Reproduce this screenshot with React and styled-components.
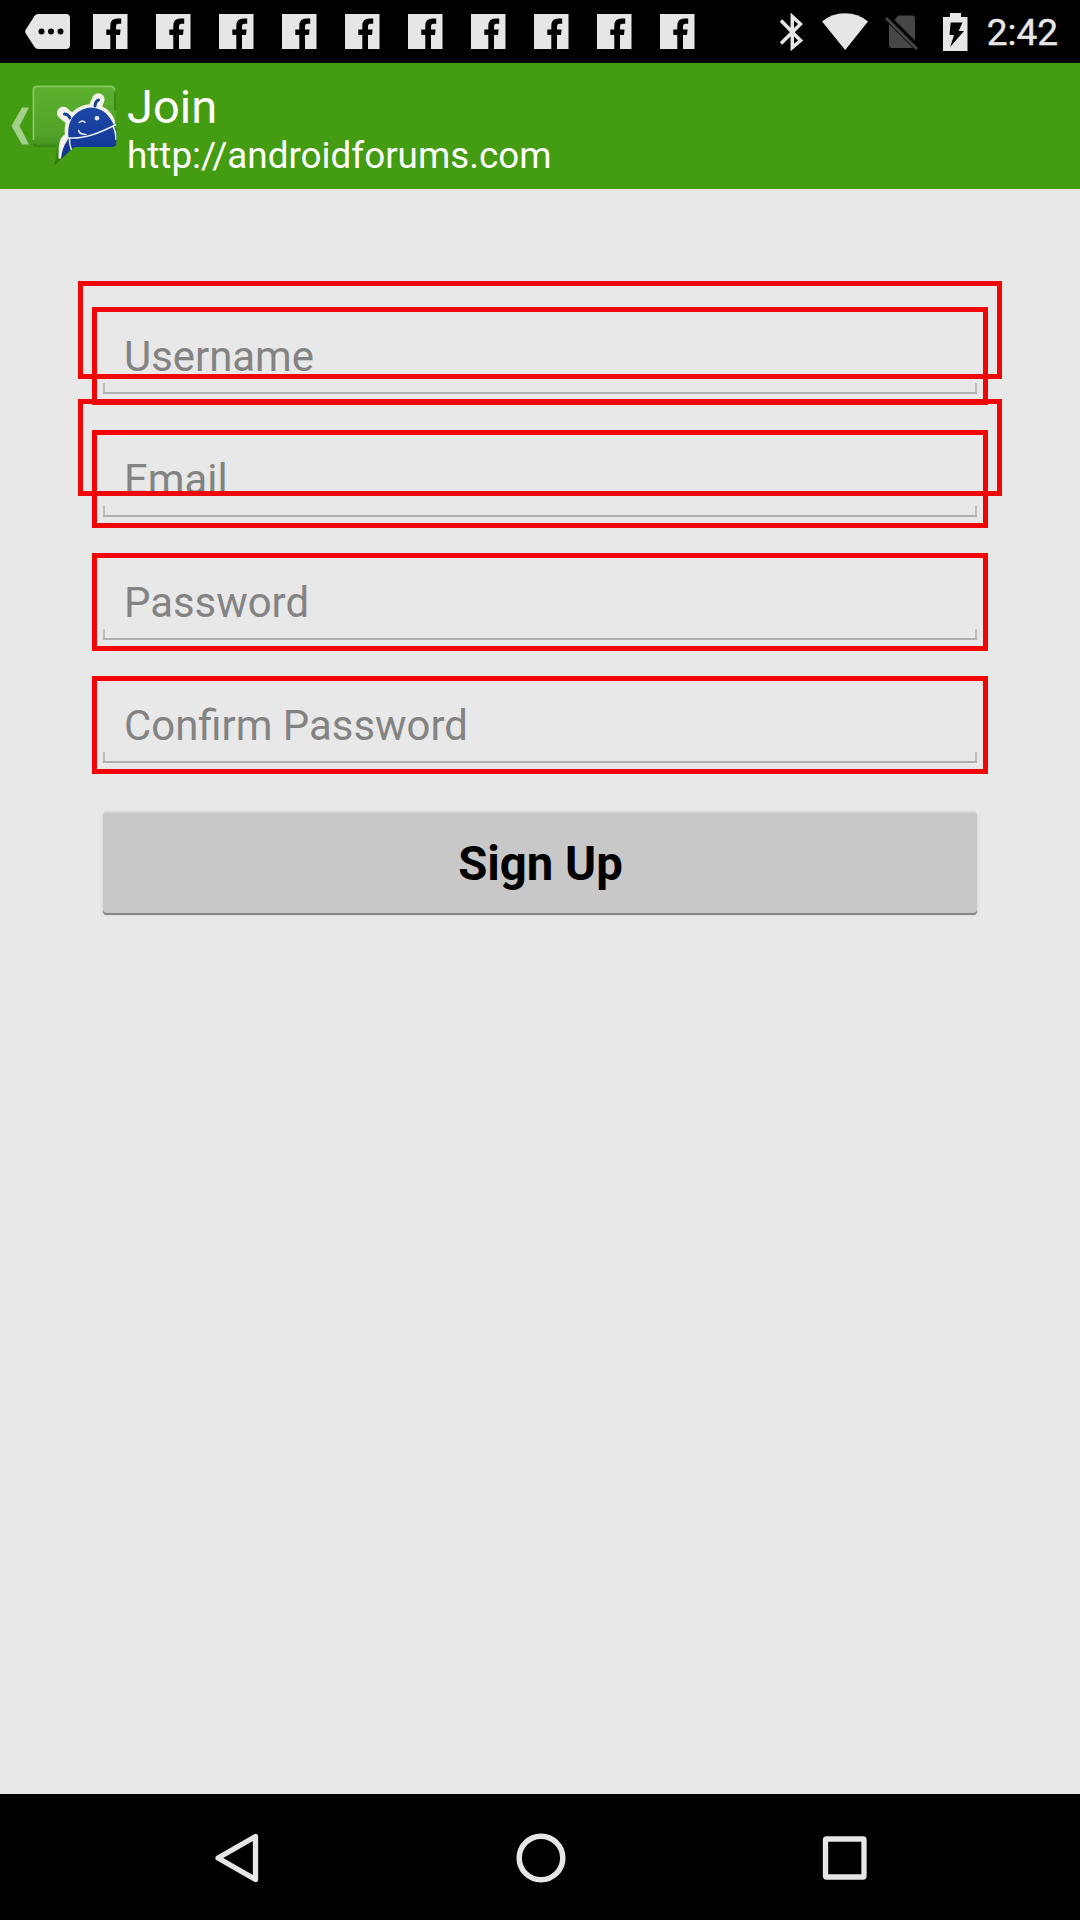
import React from "react";
import styled, { createGlobalStyle } from "styled-components";

const GlobalStyle = createGlobalStyle`
  * { box-sizing: border-box; }
  body { margin: 0; background: #e8e8e8; font-family: Roboto, sans-serif; }
`;

const Screen = styled.div`
  display: flex;
  flex-direction: column;
  width: 1080px;
  height: 1920px;
  overflow: hidden;
  background: #e8e8e8;
`;

const StatusBar = styled.header`
  display: flex;
  justify-content: space-between;
  align-items: center;
  height: 63px;
  padding: 0 22px 0 25px;
  background: #000;
`;

const Notifications = styled.div`
  display: flex;
  align-items: center;
  gap: 28px;
`;

const MoreIcon = styled.svg`
  margin-right: -5px;
`;

const SystemIcons = styled.div`
  display: flex;
  align-items: center;
`;

const StatusIcon = styled.svg`
  margin-right: ${(p) => p.$gap}px;
`;

const Clock = styled.time`
  color: #e6e6e6;
  font-size: 37px;
  line-height: 44px;
  padding-top: 3px;
  -webkit-text-stroke: 0.4px #e6e6e6;
`;

const AppBar = styled.div`
  display: flex;
  align-items: flex-start;
  height: 126px;
  padding: 20px 11px;
  background: #449c12;
`;

const UpButton = styled.button`
  display: flex;
  align-items: flex-start;
  padding: 1px 0 0;
  border: 0;
  background: none;
`;

const Titles = styled.div`
  display: flex;
  flex-direction: column;
  padding: 0 0 0 9px;
  color: #fff;
`;

const Title = styled.h1`
  margin: 0;
  font-size: 47px;
  line-height: 48px;
  font-weight: 400;
`;

const Subtitle = styled.span`
  padding-top: 3px;
  font-size: 36.85px;
  line-height: 44px;
`;

const Form = styled.form`
  flex: 1;
  display: flex;
  flex-direction: column;
  gap: 25px;
  padding: 118px 92px 0;
`;

const FieldFrame = styled.div`
  position: relative;
  display: flex;
  flex-direction: column;
  justify-content: flex-end;
  height: 98px;
  padding: 0 6px 6px;
  border: 5px solid #f20505;
`;

const Highlight = styled.span`
  position: absolute;
  z-index: 1;
  top: ${(p) => p.$top}px;
  left: -19px;
  right: -19px;
  height: ${(p) => p.$height}px;
  border: 5px solid #f00808;
  pointer-events: none;
`;

const Input = styled.input`
  width: 100%;
  height: 71px;
  padding: 0 20px 4px 21px;
  border: 0;
  outline: 0;
  background:
    linear-gradient(#b0b0b0, #b0b0b0) left bottom / 100% 2px no-repeat,
    linear-gradient(#bcbcbc, #bcbcbc) left bottom / 2px 11px no-repeat,
    linear-gradient(#bcbcbc, #bcbcbc) right bottom / 2px 11px no-repeat;
  font: 400 41.9px/50px Roboto, sans-serif;
  &::placeholder { color: #838383; opacity: 1; }
`;

const SignUp = styled.button`
  height: 103px;
  margin: 13px 11px 0;
  padding: 1px 0 0 1px;
  border: 0;
  border-radius: 4px;
  background: #c8c8c8;
  box-shadow: inset 0 -2px #858585, inset 0 1px #d2d2d2, 0 0 2px #bdbdbd;
  color: #000;
  font: 700 47.3px/56px Roboto, sans-serif;
`;

const NavBar = styled.nav`
  display: flex;
  justify-content: center;
  align-items: center;
  gap: 253px;
  height: 126px;
  padding: 1px 0 0 1px;
  background: #000;
`;

const NavButton = styled.button`
  display: flex;
  padding: 0;
  border: 0;
  background: none;
`;

const light = "#e6e6e6";

const SocialIcon = () => (
  <svg width="35" height="35" viewBox="0 0 35 35">
    <path fill={light} d="M0 0H34.500V35H0Z" />
    <path fill="#000" d="M17.300 35V12Q17.300 4.600 24.500 4.600H28.200V9.800H25.500Q23 9.800 23 12.500V15.500H27.600L27 20.900H23V35Z" />
    <path fill="#000" d="M13.300 15.500H20V20.900H13.300Z" />
  </svg>
);

const ForumLogo = () => (
  <svg width="86" height="84" viewBox="32 84 86 84">
    <defs>
      <linearGradient id="bubble" x1="0" y1="0" x2="0" y2="1">
        <stop offset="0" stopColor="#5cb02e" />
        <stop offset="0.6" stopColor="#52a428" />
        <stop offset="1" stopColor="#2f7410" />
      </linearGradient>
      <linearGradient id="robot" x1="0" y1="0" x2="0" y2="1">
        <stop offset="0" stopColor="#1c48a8" />
        <stop offset="1" stopColor="#123490" />
      </linearGradient>
      <clipPath id="shape">
        <path d="M36 85H112Q116.500 85 116.500 90V143Q116.500 147 112 147H75Q68 153 55 165Q58 157 56 147H36Q32.300 147 32.300 142V90Q32.300 85 36 85Z" />
      </clipPath>
    </defs>
    <path fill="url(#bubble)" d="M36 85.500H111Q115.500 85.500 115.500 90V142Q115.500 146.500 111 146.500H74Q66 156 54 165.500Q57 157 56 146.500H36Q32.500 146.500 32.500 142V90Q32.500 85.500 36 85.500Z" />
    <path fill="none" stroke="#8aca69" strokeWidth="1.600" d="M33.500 140V90Q33.500 86.500 37 86.500H111Q114 86.500 114.500 90" />
    <path fill="none" stroke="#387d16" strokeWidth="1.600" d="M34 144Q35 146 38 146H56M115 92V110" />
    <g fill="none" stroke="#f3f3ec" strokeLinecap="round" strokeLinejoin="round">
      <path strokeWidth="12.500" d="M63.200 113L68 117M98.300 99.500L95.500 106" />
      <path strokeWidth="10" d="M70 135Q68 122 77 114.500Q90 105 103 112.500Q108 116 110 122" />
    </g>
    <g clipPath="url(#shape)">
      <path fill="#f3f3ec" d="M58.500 158L58.800 147Q59.500 137 65.500 134L72 139L67 152L60 159Z" />
      <path fill="url(#robot)" d="M68.500 138Q66.500 120 78 112Q91 103.500 103 111Q110 115.500 116.500 130V148H73L61 159Q62 148 67 141Z" />
      <path fill="none" stroke="#e9eff8" strokeWidth="1.500" d="M66 137.500Q85 141 116 124.500M69.500 138.500Q69 144 71.500 150M112.500 125.500Q116 131 116 140" />
    </g>
    <g fill="none" strokeLinecap="round">
      <path stroke="#174194" strokeWidth="3" d="M64.500 114Q68 114 70 118M98.500 100Q95.500 101 95 106" />
      <path stroke="#e9eff8" strokeWidth="1.500" d="M79.300 122.500Q82.500 119.500 85 122.500M78.700 130.500Q79.500 134.500 86 134.500" />
    </g>
    <circle cx="97" cy="118.300" r="2.300" fill="#f1f5fa" />
  </svg>
);

const fields = [
  { label: "Username", type: "text", mark: { top: -31, height: 98 } },
  { label: "Email", type: "email", mark: { top: -36, height: 97 } },
  { label: "Password", type: "password" },
  { label: "Confirm Password", type: "password" },
];

export default function App() {
  return (
    <Screen>
      <GlobalStyle />
      <StatusBar>
        <Notifications>
          <MoreIcon width="45" height="35" viewBox="0 0 45 35">
            <path fill={light} d="M13 0H41Q45 0 45 4V31Q45 35 41 35H13Q11 35 9.500 33L.8 19.500Q-.3 17.500.8 15.500L9.500 2Q11 0 13 0Z" />
            <path fill="#000" d="M13.500 17.500a3 3 0 1 0 6 0a3 3 0 1 0-6 0M23 17.500a3 3 0 1 0 6 0a3 3 0 1 0-6 0M32.500 17.500a3 3 0 1 0 6 0a3 3 0 1 0-6 0" />
          </MoreIcon>
          {Array.from({ length: 10 }, (_, i) => <SocialIcon key={i} />)}
        </Notifications>
        <SystemIcons>
          <StatusIcon $gap={19} width="23" height="38" viewBox="0 0 23 38">
            <path fill="none" stroke={light} strokeWidth="3.500" d="M1 7.500L20.500 27.500L12.300 34.500V3.500L20.500 11L1 30.500" />
          </StatusIcon>
          <StatusIcon $gap={17} width="46" height="38" viewBox="0 0 46 38">
            <path fill={light} d="M0 8.500Q10 .3 23 .3T46 8.500L23.200 37Z" />
          </StatusIcon>
          <StatusIcon $gap={25} width="33" height="38" viewBox="0 0 33 38">
            <path fill="#464646" d="M13 2.500H27Q30 2.500 30 5.500V27.500L9.500 7ZM4 11L28 35H7Q4 35 4 32Z" />
            <path stroke="#464646" strokeWidth="3" d="M1 5L32 36" />
          </StatusIcon>
          <StatusIcon $gap={19} width="25" height="38" viewBox="0 0 25 38">
            <path fill={light} d="M7 0H18V4H24.500V38H0V4H7Z" />
            <path fill="#000" d="M7.700 9.500H19.500L15.700 18H21L7.200 34L11 22H6.500Z" />
          </StatusIcon>
          <Clock>2:42</Clock>
        </SystemIcons>
      </StatusBar>

      <AppBar>
        <UpButton type="button" aria-label="Navigate up">
          <svg width="21" height="84" viewBox="11 84 21 84">
            <path fill="#a3d08b" d="M22 107.500H29L19.500 126L29 144.500H22L11.500 126Z" />
          </svg>
          <ForumLogo />
        </UpButton>
        <Titles>
          <Title>Join</Title>
          <Subtitle>http://androidforums.com</Subtitle>
        </Titles>
      </AppBar>

      <Form>
        {fields.map(({ label, type, mark }) => (
          <FieldFrame key={label}>
            <Input type={type} placeholder={label} />
            {mark && <Highlight $top={mark.top} $height={mark.height} />}
          </FieldFrame>
        ))}
        <SignUp type="button">Sign Up</SignUp>
      </Form>

      <NavBar>
        <NavButton aria-label="Back">
          <svg width="50" height="50" viewBox="0 0 50 50">
            <path fill="none" stroke={light} strokeWidth="5.300" strokeLinejoin="round" d="M42.500 3.500V46.500L5 25Z" />
          </svg>
        </NavButton>
        <NavButton aria-label="Home">
          <svg width="50" height="50" viewBox="0 0 50 50">
            <circle cx="25" cy="25" r="21.800" fill="none" stroke={light} strokeWidth="5.500" />
          </svg>
        </NavButton>
        <NavButton aria-label="Recents">
          <svg width="50" height="50" viewBox="0 0 50 50">
            <rect x="6.500" y="6" width="38.500" height="38" rx="1" fill="none" stroke={light} strokeWidth="5.300" strokeLinejoin="round" />
          </svg>
        </NavButton>
      </NavBar>
    </Screen>
  );
}
